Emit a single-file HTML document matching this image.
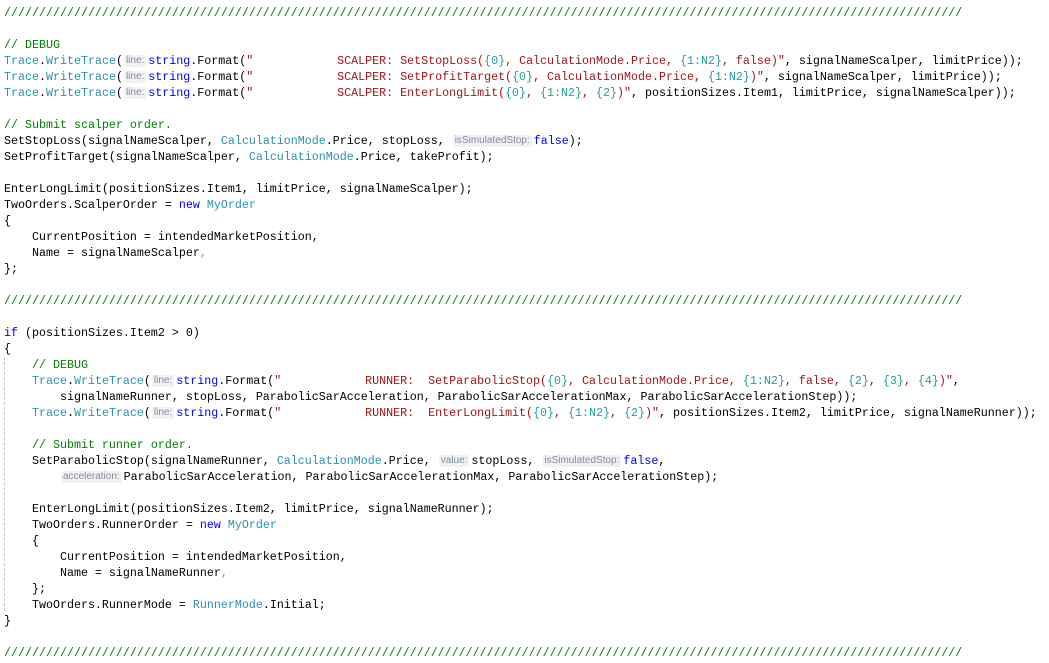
<!DOCTYPE html>
<html><head><meta charset="utf-8"><style>
html,body{margin:0;padding:0;background:#fff;width:1049px;height:663px;overflow:hidden}
pre{margin:0;padding:5px 0 0 4px;font-family:"Liberation Mono",monospace;font-size:11.67px;line-height:16px;color:#000;position:relative}
.c{color:#008000}.t{color:#2B91AF}.k{color:#0000FF}.s{color:#A31515}.f{color:#1FA0A0}
.h{display:inline-block;background:#f2f2f2;color:#8088a8;font-family:"Liberation Sans",sans-serif;font-size:10px;line-height:12px;padding:0 2px;margin:0 2px 0 1px;vertical-align:1px;border-radius:2px}
.g{position:absolute;left:4px;border-left:1px dashed #c8c8c8;width:0}
</style></head><body><pre><span class="g" style="top:357px;height:254px"></span><span class="c">/////////////////////////////////////////////////////////////////////////////////////////////////////////////////////////////////////////</span>

<span class="c">// DEBUG</span>
<span class="t">Trace</span>.<span class="t">WriteTrace</span>(<span class="h">line:</span><span class="k">string</span>.Format(<span class="s">"            SCALPER: SetStopLoss(</span><span class="f">{0}</span><span class="s">, CalculationMode.Price, </span><span class="f">{1:N2}</span><span class="s">, false)"</span>, signalNameScalper, limitPrice));
<span class="t">Trace</span>.<span class="t">WriteTrace</span>(<span class="h">line:</span><span class="k">string</span>.Format(<span class="s">"            SCALPER: SetProfitTarget(</span><span class="f">{0}</span><span class="s">, CalculationMode.Price, </span><span class="f">{1:N2}</span><span class="s">)"</span>, signalNameScalper, limitPrice));
<span class="t">Trace</span>.<span class="t">WriteTrace</span>(<span class="h">line:</span><span class="k">string</span>.Format(<span class="s">"            SCALPER: EnterLongLimit(</span><span class="f">{0}</span><span class="s">, </span><span class="f">{1:N2}</span><span class="s">, </span><span class="f">{2}</span><span class="s">)"</span>, positionSizes.Item1, limitPrice, signalNameScalper));

<span class="c">// Submit scalper order.</span>
SetStopLoss(signalNameScalper, <span class="t">CalculationMode</span>.Price, stopLoss, <span class="h">isSimulatedStop:</span><span class="k">false</span>);
SetProfitTarget(signalNameScalper, <span class="t">CalculationMode</span>.Price, takeProfit);

EnterLongLimit(positionSizes.Item1, limitPrice, signalNameScalper);
TwoOrders.ScalperOrder = <span class="k">new</span> <span class="t">MyOrder</span>
{
    CurrentPosition = intendedMarketPosition,
    Name = signalNameScalper<span style="color:#999">,</span>
};

<span class="c">/////////////////////////////////////////////////////////////////////////////////////////////////////////////////////////////////////////</span>

<span class="k">if</span> (positionSizes.Item2 &gt; 0)
{
    <span class="c">// DEBUG</span>
    <span class="t">Trace</span>.<span class="t">WriteTrace</span>(<span class="h">line:</span><span class="k">string</span>.Format(<span class="s">"            RUNNER:  SetParabolicStop(</span><span class="f">{0}</span><span class="s">, CalculationMode.Price, </span><span class="f">{1:N2}</span><span class="s">, false, </span><span class="f">{2}</span><span class="s">, </span><span class="f">{3}</span><span class="s">, </span><span class="f">{4}</span><span class="s">)"</span>,
        signalNameRunner, stopLoss, ParabolicSarAcceleration, ParabolicSarAccelerationMax, ParabolicSarAccelerationStep));
    <span class="t">Trace</span>.<span class="t">WriteTrace</span>(<span class="h">line:</span><span class="k">string</span>.Format(<span class="s">"            RUNNER:  EnterLongLimit(</span><span class="f">{0}</span><span class="s">, </span><span class="f">{1:N2}</span><span class="s">, </span><span class="f">{2}</span><span class="s">)"</span>, positionSizes.Item2, limitPrice, signalNameRunner));

    <span class="c">// Submit runner order.</span>
    SetParabolicStop(signalNameRunner, <span class="t">CalculationMode</span>.Price, <span class="h">value:</span>stopLoss, <span class="h">isSimulatedStop:</span><span class="k">false</span>,
        <span class="h">acceleration:</span>ParabolicSarAcceleration, ParabolicSarAccelerationMax, ParabolicSarAccelerationStep);

    EnterLongLimit(positionSizes.Item2, limitPrice, signalNameRunner);
    TwoOrders.RunnerOrder = <span class="k">new</span> <span class="t">MyOrder</span>
    {
        CurrentPosition = intendedMarketPosition,
        Name = signalNameRunner<span style="color:#999">,</span>
    };
    TwoOrders.RunnerMode = <span class="t">RunnerMode</span>.Initial;
}

<span class="c">/////////////////////////////////////////////////////////////////////////////////////////////////////////////////////////////////////////</span>
</pre></body></html>
